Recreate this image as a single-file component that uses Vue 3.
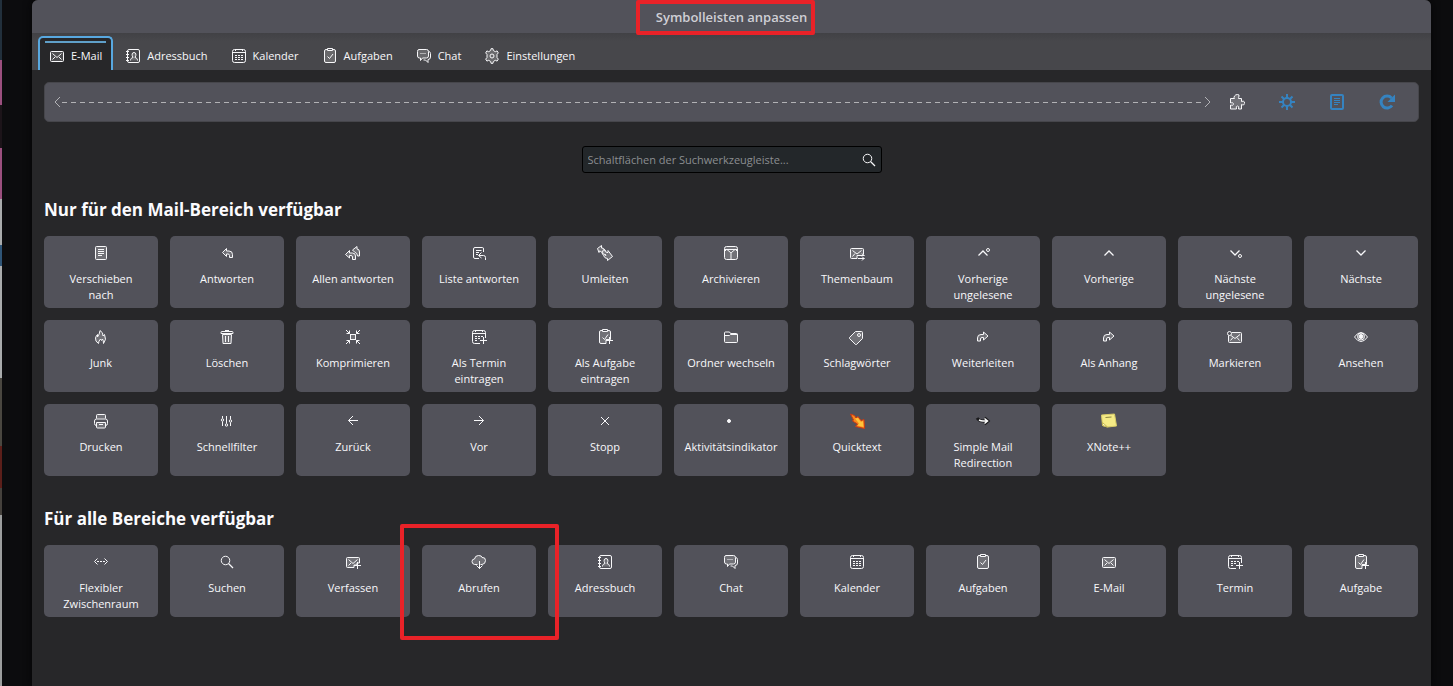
<script setup>
import { ref } from 'vue'

const tabs = [
  { icon: 'mail', label: 'E-Mail' },
  { icon: 'address', label: 'Adressbuch' },
  { icon: 'calendar', label: 'Kalender' },
  { icon: 'tasks', label: 'Aufgaben' },
  { icon: 'chat', label: 'Chat' },
  { icon: 'settings', label: 'Einstellungen' },
]
const activeTab = ref('E-Mail')
const query = ref('')

const toolbarItems = [
  { icon: 'puzzle', label: 'Add-ons' },
  { icon: 'sun', label: 'Optionen', accent: true },
  { icon: 'document-bold', label: 'Liste', accent: true },
  { icon: 'reload', label: 'Neu laden', accent: true },
]

const sections = [
  {
    title: 'Nur für den Mail-Bereich verfügbar',
    items: [
      { icon: 'document', label: 'Verschieben\nnach' },
      { icon: 'reply', label: 'Antworten' },
      { icon: 'reply-all', label: 'Allen antworten' },
      { icon: 'reply-list', label: 'Liste antworten' },
      { icon: 'redirect', label: 'Umleiten' },
      { icon: 'archive', label: 'Archivieren' },
      { icon: 'thread', label: 'Themenbaum' },
      { icon: 'prev-unread', label: 'Vorherige\nungelesene' },
      { icon: 'prev', label: 'Vorherige' },
      { icon: 'next-unread', label: 'Nächste\nungelesene' },
      { icon: 'next', label: 'Nächste' },
      { icon: 'junk', label: 'Junk' },
      { icon: 'trash', label: 'Löschen' },
      { icon: 'compact', label: 'Komprimieren' },
      { icon: 'event-add', label: 'Als Termin\neintragen' },
      { icon: 'task-add', label: 'Als Aufgabe\neintragen' },
      { icon: 'folder', label: 'Ordner wechseln' },
      { icon: 'tag', label: 'Schlagwörter' },
      { icon: 'forward', label: 'Weiterleiten' },
      { icon: 'forward', label: 'Als Anhang' },
      { icon: 'mark', label: 'Markieren' },
      { icon: 'eye', label: 'Ansehen' },
      { icon: 'print', label: 'Drucken' },
      { icon: 'filter', label: 'Schnellfilter' },
      { icon: 'arrow-left', label: 'Zurück' },
      { icon: 'arrow-right', label: 'Vor' },
      { icon: 'stop', label: 'Stopp' },
      { icon: 'dot', label: 'Aktivitätsindikator' },
      { icon: 'quicktext', label: 'Quicktext' },
      { icon: 'mail-redirection', label: 'Simple Mail\nRedirection' },
      { icon: 'note', label: 'XNote++' },
    ],
  },
  {
    title: 'Für alle Bereiche verfügbar',
    items: [
      { icon: 'space', label: 'Flexibler\nZwischenraum' },
      { icon: 'search', label: 'Suchen' },
      { icon: 'compose', label: 'Verfassen' },
      { icon: 'cloud', label: 'Abrufen', marked: true },
      { icon: 'address', label: 'Adressbuch' },
      { icon: 'chat', label: 'Chat' },
      { icon: 'calendar', label: 'Kalender' },
      { icon: 'tasks', label: 'Aufgaben' },
      { icon: 'mail', label: 'E-Mail' },
      { icon: 'event-add', label: 'Termin' },
      { icon: 'task-add', label: 'Aufgabe' },
    ],
  },
]
</script>

<template>
  <div class="backdrop">
    <svg class="sprite" aria-hidden="true">
      <symbol id="i-mail" viewBox="0 0 16 16">
        <rect class="f" x="1.500" y="3.500" width="13" height="10" rx="1" />
        <path d="M3.500 5.500 8 9.500l4.500-4M3.500 11.500 6 9M12.500 11.500 10 9" />
      </symbol>
      <symbol id="i-address" viewBox="0 0 16 16">
        <rect x="2.500" y="1.500" width="12" height="13" rx="1.500" />
        <path d="M1 3.500h3M1 6.500h3M1 9.500h3M1 12.500h3" />
        <path class="f" d="M5.500 12.500c0-2 1-2.500 2.500-3C6.500 7 6.800 4.500 9 4.500s2.500 2.500 1 5c1.500.5 2.500 1 2.500 3" />
      </symbol>
      <symbol id="i-calendar" viewBox="0 0 16 16">
        <rect x="1.500" y="1.500" width="13" height="13" rx="2" />
        <path d="M2 4.500h12M4.500 1v2M11.500 1v2" />
        <path stroke-dasharray="2 1" d="M4 7.500h8.500M4 9.500h8.500M4 11.500h8.500" />
      </symbol>
      <symbol id="i-tasks" viewBox="0 0 16 16">
        <rect class="f" x="2.500" y="1.500" width="11" height="13" rx="1.500" />
        <path class="tile-fill" d="M5.500.5h5v2h-5z" />
        <path d="m5.500 8.500 2 2 3.500-4.500" />
      </symbol>
      <symbol id="i-chat" viewBox="0 0 16 16">
        <path class="f" d="M3 1.500h7.500Q12.500 1.500 12.500 3.500v4.500q0 2-2 2H6.500L4.500 12.500V10H3.500Q1.500 10 1.500 8V3.500Q1.500 1.500 3 1.500z" />
        <path d="M13 3.500q1.500.5 1.500 2V9q0 2.500-2.500 2.500v3L9.500 12H7.500M4.500 5.500h1M6.500 5.500h1M8.500 5.500h1" />
      </symbol>
      <symbol id="i-settings" viewBox="0 0 16 16">
        <path class="f" d="M6.700 2.500 7 .7h2l.3 1.800 2 1.200 1.800-.8 1.200 2L13 6.500v3l1.300 1.600-1.200 2-1.800-.8-2 1.200-.3 1.800H7l-.3-1.800-2-1.200-1.800.8-1.200-2L3 9.500v-3L1.700 4.900l1.200-2 1.800.8z" />
        <circle cx="8" cy="8" r="2" />
      </symbol>
      <symbol id="i-document" viewBox="0 0 16 16">
        <rect class="f" x="2.500" y="1.500" width="11" height="13" rx="1" />
        <path d="M5 4.500h6M5 6.500h6M5 8.500h6M5 10.500h4" />
      </symbol>
      <symbol id="i-document-bold" viewBox="0 0 16 16">
        <rect x="2" y="1" width="12" height="14" rx="1" stroke-width="2" />
        <path d="M5 4.500h6M5 6.500h6M5 8.500h6M5 10.500h4" />
      </symbol>
      <symbol id="i-reply" viewBox="0 0 16 16">
        <path class="f" d="m7.500 3.500-4 4 4 4v-2.500H9q1.500 0 1.500 1.500v2h3V9.500q0-3.500-3.500-3.500H7.500z" />
      </symbol>
      <symbol id="i-reply-all" viewBox="0 0 16 16">
        <path class="f" d="M7.500 5 12 1.500v2.500q2.500 0 2.500 3V11h-2q0-3-3-4z" />
        <path class="f" d="m4.500 5.500-4 4 4 3.500v-2.500h1.500q1.500 0 1.500 1.500v2.500h3V11q0-3-3-3h-3z" />
      </symbol>
      <symbol id="i-reply-list" viewBox="0 0 16 16">
        <path d="M8 13.500H4Q2.500 13.500 2.500 12V4Q2.500 2.500 4 2.500h7.500Q12.500 2.500 12.500 4v3M5 5.500h5.500M5 7.500h3M5 9.500h2M10.500 7.500l-3 3 3 2.500M8 10.500h4.500q2 0 2 2V15" />
      </symbol>
      <symbol id="i-redirect" viewBox="0 0 16 16">
        <path class="f" d="M4.500.5.500 3.500l1.500 4V6q2 0 3.500 2T9 10.500l-1-1.500M4.500.5V3q2.500 0 3.500 2l1 1.500" />
        <path class="f" d="M6.500 4.500q1.500 2.500 3.500 3h1V5.500l4.500 6-5 4v-2q-3 0-4-3L5 8z" />
      </symbol>
      <symbol id="i-archive" viewBox="0 0 16 16">
        <rect class="f" x="1.500" y="1.500" width="13" height="13" rx="2" />
        <path d="M2 4.500h12M4 4.500 7.500 7.500h1L12 4.500M2 6l1.500-1.500M14 6l-1.500-1.500" />
        <path stroke-width="2" stroke-dasharray="1 1" d="M8 7.500V14" />
      </symbol>
      <symbol id="i-thread" viewBox="0 0 16 16">
        <path class="f" d="M8 13.500H2.500Q1.500 13.500 1.500 12.500v-8q0-1 1-1h11q1 0 1 1V9L13 10.500H8z" />
        <path d="M3.500 5.500 8 9l4.500-3.500M3.500 11.500 6 8.500M9 10.500h6.500M9 13.500h6.500M13 8.500l2 2M13 11.500l2 2-2 2" />
      </symbol>
      <symbol id="i-prev-unread" viewBox="0 0 16 16">
        <path stroke-width="1.250" d="m3.500 10.500 4.500-4.500 4.500 4.500" />
        <circle cx="13" cy="5" r="1.500" />
      </symbol>
      <symbol id="i-prev" viewBox="0 0 16 16"><path stroke-width="1.250" d="m3.500 10.500 4.500-4.500 4.500 4.500" /></symbol>
      <symbol id="i-next-unread" viewBox="0 0 16 16">
        <path stroke-width="1.250" d="M3.500 5.500 8 10l4.500-4.500" />
        <circle cx="13" cy="11" r="1.500" />
      </symbol>
      <symbol id="i-next" viewBox="0 0 16 16"><path stroke-width="1.250" d="M3.500 5.500 8 10l4.500-4.500" /></symbol>
      <symbol id="i-junk" viewBox="0 0 16 16">
        <path class="f" d="M5.500 14.500Q2 12.500 2.500 9q.5-2 2-3.500v2.500q2-2.500 2.500-6.500 3.500 2 3 5.500l1.500-1.500q2.500 5-1 9 0-3-1-4.500l-1 1.500-1-1.500q-2 2-2 4.500z" />
      </symbol>
      <symbol id="i-trash" viewBox="0 0 16 16">
        <path class="f" d="M3.500 5.500h9l-.5 9H4z" />
        <path d="M2 4.500h12V3.500q0-1-1-1H3q-1 0-1 1zM6 1.500h4M6.500 7v6M9.500 7v6" />
      </symbol>
      <symbol id="i-compact" viewBox="0 0 16 16">
        <rect class="f" x="5.500" y="5.500" width="5" height="5" />
        <path d="m1 1 3.500 3.500M15 1l-3.500 3.500M1 15l3.500-3.500M15 15l-3.500-3.500M1.500 4.500h3v-3M14.500 4.500h-3v-3M1.500 11.500h3v3M14.500 11.500h-3v3" />
      </symbol>
      <symbol id="i-event-add" viewBox="0 0 16 16">
        <path d="M9 14.500H3.500q-2 0-2-2v-9q0-2 2-2h9q2 0 2 2V9M2 4.500h12M4.500 1v2M11.500 1v2M12.500 8v7M9 11.500h7" />
        <path stroke-dasharray="2 1" d="M4 7.500h8M4 9.500h6M4 11.500h3" />
      </symbol>
      <symbol id="i-task-add" viewBox="0 0 16 16">
        <path class="f" d="M9 14.500H4q-1.500 0-1.500-1.500V3Q2.500 1.500 4 1.500h8q1.500 0 1.500 1.500v7.500H9z" />
        <path class="tile-fill" d="M5.500.5h5v2h-5z" />
        <path d="m5.500 8.500 2 2L11 5.500M12.500 8v7M9 11.500h7" />
      </symbol>
      <symbol id="i-folder" viewBox="0 0 16 16">
        <path class="f" d="M7.500 5.500h7v7q0 1-1 1h-11q-1 0-1-1v-6h5z" />
        <path d="M1.500 7V4q0-1 1-1h4l1 1.500h6q1 0 1 1" />
      </symbol>
      <symbol id="i-tag" viewBox="0 0 16 16">
        <path class="f" d="M6.500 2.500h6q1 0 1 1v6l-6 6h-1l-6-6v-1z" />
        <circle cx="10" cy="6" r="1.500" />
      </symbol>
      <symbol id="i-forward" viewBox="0 0 16 16">
        <path class="f" d="m8.500 3 4.500 4-4.500 4V8.500H7q-1.500 0-1.500 1.500v2h-3V9q0-3.500 3.500-3.500h2.500z" />
      </symbol>
      <symbol id="i-mark" viewBox="0 0 16 16">
        <path class="f" d="M5 3.500h8.500q1 0 1 1v8q0 1-1 1h-11q-1 0-1-1V7z" />
        <path d="m4 6.500 4 3 5-4M3.500 11.500 6 8.500M12.500 11.500 10 8.500" />
        <circle class="tile-fill" cx="2.500" cy="4.500" r="2" />
      </symbol>
      <symbol id="i-eye" viewBox="0 0 16 16">
        <path d="M1.500 8Q4.500 3.500 8 3.500T14.500 8Q11.500 12.500 8 12.500T1.500 8z" />
        <circle class="f" cx="8" cy="7.500" r="3.500" />
        <circle class="s" cx="8" cy="7.500" r="2" />
      </symbol>
      <symbol id="i-print" viewBox="0 0 16 16">
        <path class="f" d="M3.500 5.500v-3q0-1 1-1h7q1 0 1 1v3" />
        <path d="M3.500 12.500q-2 0-2-2V8q0-2 2-2h9q2 0 2 2v2.500q0 2-2 2" />
        <path class="f" d="M3.500 9.500h9V14q0 1-1 1h-7q-1 0-1-1zM6 11.500h4" />
      </symbol>
      <symbol id="i-filter" viewBox="0 0 16 16">
        <path d="M3.500 3v2.500M3.500 8.500V13M7.500 3v7.500M11.500 3v3.500M11.500 9.500V13" />
        <circle cx="3.500" cy="7" r="1.200" />
        <circle cx="7.500" cy="12" r="1.200" />
        <circle cx="11.500" cy="8" r="1.200" />
      </symbol>
      <symbol id="i-arrow-left" viewBox="0 0 16 16"><path d="M13 7.500H3.500M8 3 3.500 7.500 8 12" /></symbol>
      <symbol id="i-arrow-right" viewBox="0 0 16 16"><path d="M3 7.500h9.500M8 3l4.500 4.500L8 12" /></symbol>
      <symbol id="i-stop" viewBox="0 0 16 16"><path d="m4 4 8 8M12 4l-8 8" /></symbol>
      <symbol id="i-dot" viewBox="0 0 16 16"><circle class="s" cx="6" cy="8" r="1.500" /></symbol>
      <symbol id="i-quicktext" viewBox="0 0 16 16">
        <path fill="#f98a1c" stroke="#c93a14" d="m1.500 1 4 1.500L7 5l2-1.500 3 4 3-1 .5 9-9-2 2-2.500-5-3L4.500 7z" />
        <path fill="#ffc43a" stroke="none" d="m6 5.500 3-.5 3 4 2-1 .5 6-6-1.500 1.500-2z" />
      </symbol>
      <symbol id="i-mail-redirection" viewBox="0 0 16 16">
        <path stroke="#1b1b1d" stroke-width="3" d="M2 5q2 3 6 3h4M9.500 5l3.500 3-3.500 3" />
        <path stroke="#fff" stroke-width="1.500" d="M4 7q2 1 4 1h4M9.500 5.500l3 2.500-3 2.500" />
      </symbol>
      <symbol id="i-note" viewBox="0 0 16 16">
        <path fill="#f5eb86" stroke="#d8cc68" d="m.5 2 13-1 2 12-9 1-5-1.500z" />
        <path stroke="#8c8440" d="m4.500 4.500 6-.5" />
        <path fill="#fffbc8" stroke="#c2b655" d="M1.500 9.500q2 2 5 4.500l-5-1.500z" />
      </symbol>
      <symbol id="i-space" viewBox="0 0 16 16">
        <path d="M4.500 4.500l-3 3 3 3M11.500 4.500l3 3-3 3" />
        <path stroke-dasharray="2 1" d="M4 7.500h8.500" />
      </symbol>
      <symbol id="i-search" viewBox="0 0 16 16">
        <circle cx="6.500" cy="6.500" r="4.250" />
        <path stroke-width="1.250" d="m9.500 9.500 4.500 4.500" />
      </symbol>
      <symbol id="i-compose" viewBox="0 0 16 16">
        <path class="f" d="M9 13.500H2.500q-1 0-1-1v-8q0-1 1-1h11q1 0 1 1V9H12v2H9z" />
        <path d="M3.500 5.500 8 9.500l4.500-4M3.500 11.500 6 9M12.500 8v7M9 11.500h7" />
      </symbol>
      <symbol id="i-cloud" viewBox="0 0 16 16">
        <path class="f" d="M6.500 10.500h-3Q1 10 1 7.500T3.500 5q.5-3.500 4-3.500t3.500 2q3.500-.5 3.500 3t-3.500 4H9.500" />
        <path d="M8.500 7v8M5.500 11.500l3 3 3-3" />
      </symbol>
      <symbol id="i-puzzle" viewBox="0 0 16 16">
        <path class="f" d="M1.500 4.500h4Q4.500 3.500 5.500 2T8.500.5 10 2t-.5 2.500h3v3q2-1 3 .5t-1 3q-1 0-2-.5v4.500h-3q1-3-1-3t-1 3h-6v-4q3 1 3-1t-3-1z" />
      </symbol>
      <symbol id="i-sun" viewBox="0 0 16 16">
        <circle cx="8" cy="8" r="4" stroke-width="2" />
        <path stroke-width="2" d="M8 0v4M8 12v4M0 8h4M12 8h4M2.500 2.500l2.500 2.500M11 11l2.500 2.500M13.500 2.500 11 5M5 11l-2.500 2.500" />
      </symbol>
      <symbol id="i-reload" viewBox="0 0 16 16">
        <path stroke-width="3" d="M13 11.500A6 6 0 1 1 12.500 4" />
        <path class="s" stroke="none" d="M16 .5V8H8.500z" />
      </symbol>
    </svg>

    <div class="dialog" role="dialog" aria-labelledby="dialog-title">
      <header class="titlebar">
        <h1 id="dialog-title" class="title marked">Symbolleisten anpassen</h1>
      </header>

      <nav class="tabs" role="tablist">
        <button
          v-for="tab in tabs"
          :key="tab.label"
          class="tab"
          :class="{ active: tab.label === activeTab }"
          role="tab"
          :aria-selected="tab.label === activeTab"
          @click="activeTab = tab.label"
        >
          <svg class="icon"><use :href="'#i-' + tab.icon" /></svg>
          <span>{{ tab.label }}</span>
        </button>
      </nav>

      <main class="content">
        <div class="toolbar">
          <div class="spacer">
            <svg class="cap" viewBox="0 0 8 12"><path d="M7 1 2 6l5 5" /></svg>
            <span class="dashes"></span>
            <svg class="cap" viewBox="0 0 8 12"><path d="m1 1 5 5-5 5" /></svg>
          </div>
          <button
            v-for="item in toolbarItems"
            :key="item.icon"
            class="tool"
            :class="{ accent: item.accent }"
            :aria-label="item.label"
          >
            <svg class="icon"><use :href="'#i-' + item.icon" /></svg>
          </button>
        </div>

        <div class="search">
          <input
            v-model="query"
            type="text"
            aria-label="Schaltflächen der Suchwerkzeugleiste"
            placeholder="Schaltflächen der Suchwerkzeugleiste..."
          />
          <svg class="icon"><use href="#i-search" /></svg>
        </div>

        <section v-for="section in sections" :key="section.title" class="section">
          <h2>{{ section.title }}</h2>
          <div class="grid">
            <button
              v-for="item in section.items"
              :key="item.label"
              class="tile"
              :class="{ marked: item.marked }"
            >
              <svg class="icon"><use :href="'#i-' + item.icon" /></svg>
              <span class="label">{{ item.label }}</span>
            </button>
          </div>
        </section>
      </main>
    </div>
  </div>
</template>

<style>
body {
  margin: 0;
  background: #0c0c0e;
}
</style>

<style scoped>
.backdrop {
  display: flex;
  box-sizing: border-box;
  min-height: 100vh;
  padding: 0 22px 0 32px;
  background:
    linear-gradient(
      #22303c 0 60px, #9b4f7e 60px 105px, #1c1419 105px 148px, #9b4f7e 148px 199px,
      #a9abac 199px 245px, #2f5577 245px 266px, #a9abac 266px 378px, #4a4740 378px 446px,
      #5c1f1a 446px 488px, #45413c 488px 515px, #9c9e9e 515px
    ) 0 0 / 2px 100% no-repeat,
    #0c0c0e;
  font-family: "Open Sans", "Noto Sans", sans-serif;
  font-size: 11px;
  line-height: 16px;
  color: #f8f8fa;
}

.sprite {
  position: absolute;
  width: 0;
  height: 0;
}

.sprite .f {
  fill: rgba(255, 255, 255, 0.18);
}

.sprite .s {
  fill: currentColor;
}

.sprite .tile-fill {
  fill: #52525a;
}

.icon {
  flex: none;
  width: 16px;
  height: 16px;
  fill: none;
  stroke: currentColor;
}

button {
  border: 0;
  padding: 0;
  font: inherit;
  color: inherit;
  cursor: pointer;
}

.dialog {
  flex: 1;
  min-width: 0;
  overflow: hidden;
  border-radius: 6px 6px 0 0;
  background: #272729;
  box-shadow: 0 0 8px #050506;
}

.titlebar {
  display: flex;
  justify-content: center;
  align-items: center;
  height: 33px;
  background: #52525a;
}

.title {
  margin: 0;
  font-size: 13px;
  font-weight: 600;
  line-height: 18px;
  color: #cfcfd5;
}

.marked {
  position: relative;
}

.marked::after {
  content: "";
  position: absolute;
  border: 4px solid #e92228;
  border-radius: 2px;
}

.title.marked::after {
  inset: -8px -8px -9px -20px;
}

.tile.marked::after {
  z-index: 1;
  inset: -21px -23px -23px -22px;
}

.tabs {
  display: flex;
  gap: 1px;
  padding: 3px 6px 0;
  background: linear-gradient(#414145, #47474b 8px);
}

.tab {
  position: relative;
  display: flex;
  align-items: center;
  gap: 6px;
  box-sizing: border-box;
  height: 34px;
  padding: 4px 9px 0;
  border: 2px solid transparent;
  border-bottom: 0;
  border-radius: 5px 5px 0 0;
  background: none;
}

.tab.active {
  border-color: #58a8e0;
  background: #272729;
}

.tab.active::before {
  content: "";
  position: absolute;
  top: 3px;
  left: 5px;
  right: 5px;
  height: 2px;
  background: #5f9fc8;
}

.content {
  padding: 12px;
}

.toolbar {
  display: flex;
  align-items: center;
  box-sizing: border-box;
  height: 40px;
  padding: 0 6px 0 8px;
  border: 1px solid #46464b;
  border-radius: 5px;
  background: #52525a;
}

.spacer {
  display: flex;
  flex: 1;
  align-items: center;
  color: #b2b2b6;
}

.cap {
  flex: none;
  width: 8px;
  height: 12px;
  fill: none;
  stroke: currentColor;
}

.dashes {
  flex: 1;
  height: 1px;
  margin: 0 1px;
  background: repeating-linear-gradient(90deg, #b2b2b5 0 5px, transparent 5px 9px);
}

.tool {
  display: flex;
  justify-content: center;
  width: 50px;
  background: none;
}

.accent {
  color: #3583c0;
}

.search {
  display: flex;
  align-items: center;
  box-sizing: border-box;
  width: 300px;
  height: 27px;
  margin: 24px auto 25px;
  padding: 0 4px 0 5px;
  border: 1px solid #000;
  border-radius: 3px;
  background: #23272a;
}

.search input {
  flex: 1;
  min-width: 0;
  border: 0;
  padding: 0;
  outline: 0;
  background: none;
  font: inherit;
  color: inherit;
}

.search input::placeholder {
  color: #8b8e91;
  opacity: 1;
}

.section + .section {
  margin-top: 31px;
}

h2 {
  margin: 0 0 14px;
  font-size: 17px;
  font-weight: 700;
  line-height: 24px;
  color: #fbfbfe;
}

.grid {
  display: grid;
  grid-template-columns: repeat(auto-fill, minmax(114px, 1fr));
  gap: 12px;
  padding-right: 1px;
}

.tile {
  display: flex;
  flex-direction: column;
  align-items: center;
  gap: 10px;
  box-sizing: border-box;
  min-height: 72px;
  padding: 9px 4px 5px;
  border-radius: 5px;
  background: #52525a;
}

.label {
  white-space: pre;
  text-align: center;
}
</style>
